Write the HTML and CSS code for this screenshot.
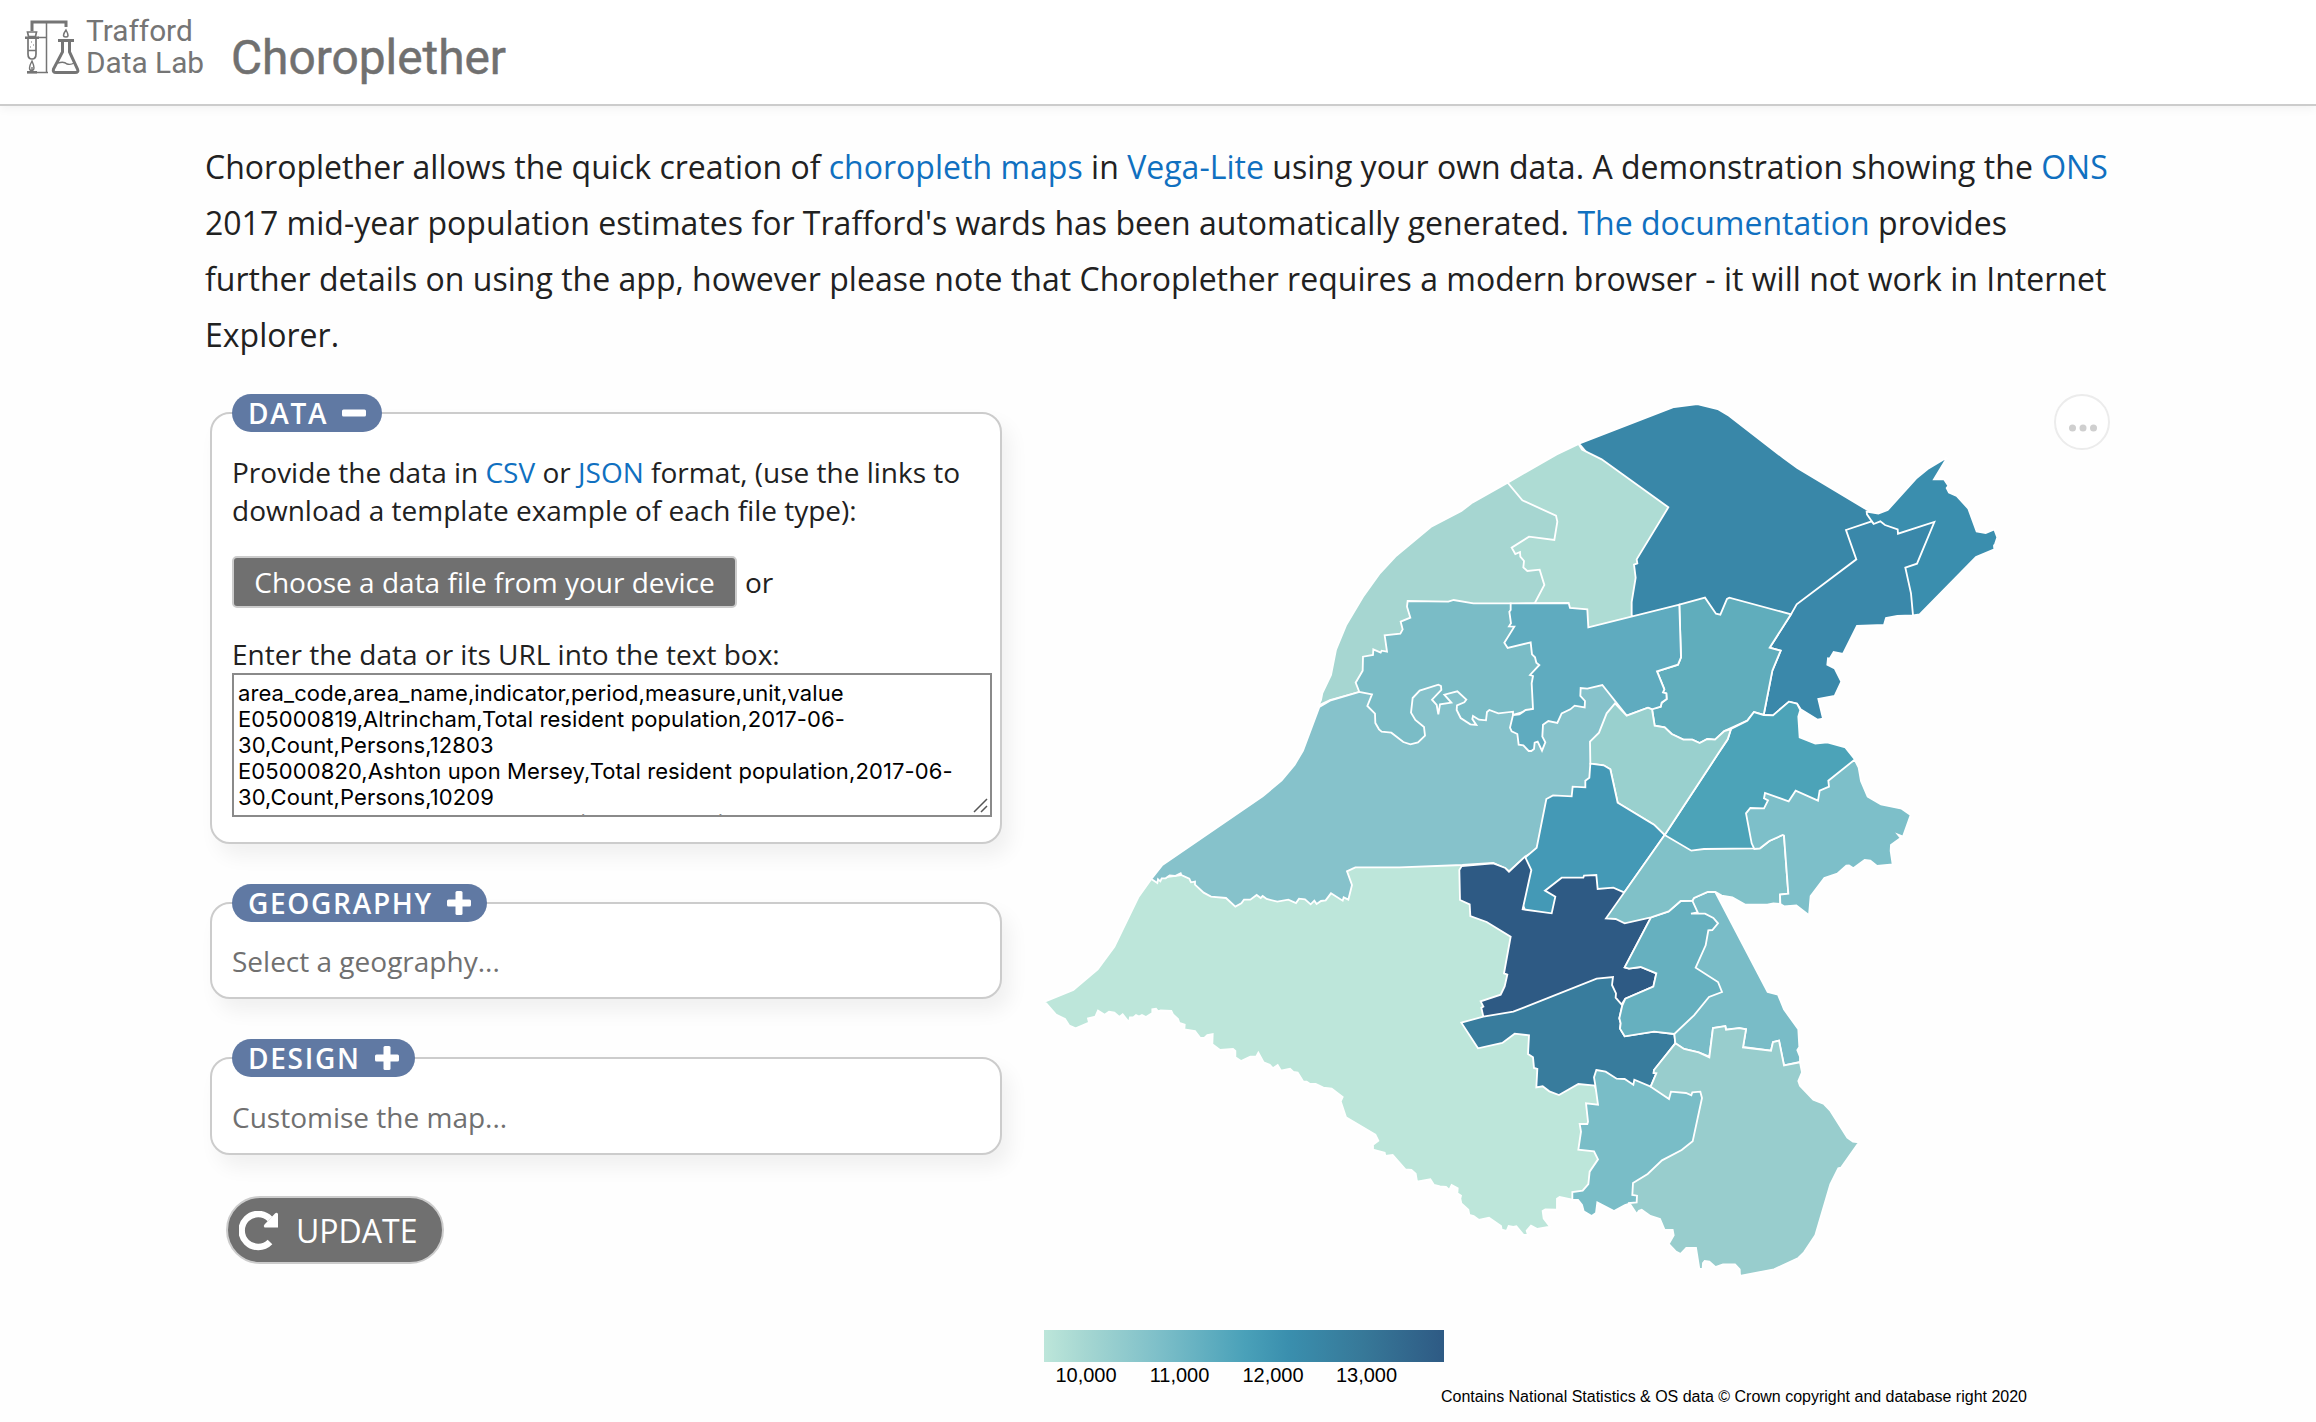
FILE: index.html
```html
<!DOCTYPE html>
<html lang="en">
<head>
<meta charset="utf-8">
<title>Choroplether</title>
<link rel="stylesheet" href="styles.css">
</head>
<body>
<header class="banner">
  <svg class="logo" width="56" height="56" viewBox="0 0 56 56" fill="none" stroke="#757575">
    <path d="M8 13V4H42V9" stroke-width="3"/>
    <path d="M22.500 5V55M14 19.500H22M3 54.500H24" stroke-width="1.500"/>
    <path d="M3 54.300H13M1 19.800H15" stroke-width="2.500"/>
    <path d="M3.500 14H12.500L11.500 18.500H4.500Z" stroke-width="1.700"/>
    <path d="M4 21V36Q4 41 8 41Q12 41 12 36V21M4 32.500H12" stroke-width="1.700"/>
    <path d="M7 24h1M9 27h1M6 29h1" stroke-width="1.200"/>
    <path d="M8 43Q3 52 8 53Q12 52 8 43ZM8 49V53" stroke-width="1.400"/>
    <path d="M42 12Q37 19 42 19Q46 19 42 12Z" stroke-width="1.500"/>
    <path d="M34 22.500H50M38.500 23V34L29.500 51Q28.500 54.500 32 54.500H51Q55 54.500 53.500 51L45.500 34V23" stroke-width="3"/>
    <path d="M34 45Q40 43 43 46Q47 47 50 45" stroke-width="1.400"/>
  </svg>
  <div class="lab"><span class="lab-a">Trafford</span><span class="lab-b">Data Lab</span></div>
  <h1 class="title">Choroplether</h1>
</header>
<main>
  <p class="intro">Choroplether allows the quick creation of <a>choropleth maps</a> in <a>Vega-Lite</a> using your own data. A demonstration showing the <a>ONS</a><br>2017 mid-year population estimates for Trafford's wards has been automatically generated. <a>The documentation</a> provides<br>further details on using the app, however please note that Choroplether requires a modern browser - it will not work in Internet<br>Explorer.</p>
  <div class="columns">
    <form class="controls">
      <section class="panel panel-data">
        <h2 class="pill">DATA <svg width="24" height="24" viewBox="0 0 24 24"><rect y="8.500" width="24" height="7" rx="1.500" fill="#fff"/></svg></h2>
        <p class="text">Provide the data in <a>CSV</a> or <a>JSON</a> format, (use the links to<br>download a template example of each file type):</p>
        <div class="choose"><button type="button" class="file">Choose a data file from your device</button><span class="or">or</span></div>
        <label class="text">Enter the data or its URL into the text box:</label>
        <div class="box">
          <textarea spellcheck="false">area_code,area_name,indicator,period,measure,unit,value
E05000819,Altrincham,Total resident population,2017-06-
30,Count,Persons,12803
E05000820,Ashton upon Mersey,Total resident population,2017-06-
30,Count,Persons,10209
E05000821,Broadheath,Total resident population,2017-06-</textarea>
          <svg class="grip" width="16" height="16" viewBox="0 0 16 16" stroke="#555" stroke-width="1.500"><path d="M1 14L14 1M8 14L14 8"/></svg>
        </div>
      </section>
      <section class="panel panel-geo">
        <h2 class="pill">GEOGRAPHY <svg width="24" height="24" viewBox="0 0 24 24" fill="#fff"><rect y="8.500" width="24" height="7" rx="1.500"/><rect x="8.500" width="7" height="24" rx="1.500"/></svg></h2>
        <p class="hint">Select a geography...</p>
      </section>
      <section class="panel panel-design">
        <h2 class="pill">DESIGN <svg width="24" height="24" viewBox="0 0 24 24" fill="#fff"><rect y="8.500" width="24" height="7" rx="1.500"/><rect x="8.500" width="7" height="24" rx="1.500"/></svg></h2>
        <p class="hint">Customise the map...</p>
      </section>
      <button type="button" class="update"><svg width="40" height="40" viewBox="0 0 40 40"><path d="M31 31A16.500 16.500 0 1 1 31 8" fill="none" stroke="#fff" stroke-width="6.500"/><path d="M39 3V16.500H25.500Q24 15 25.500 13.500L36 2.500Q38 1 39 3Z" fill="#fff"/></svg>UPDATE</button>
    </form>
    <figure class="map">
      <svg width="1090" height="1032" viewBox="1030 390 1090 1032">
        <defs><linearGradient id="ramp"><stop offset="0" stop-color="#bde6da"/><stop offset=".1" stop-color="#a6d7d2"/><stop offset=".28" stop-color="#7fc0c9"/><stop offset=".5" stop-color="#4aa1b9"/><stop offset=".61" stop-color="#3a8fae"/><stop offset=".8" stop-color="#377898"/><stop offset="1" stop-color="#2e5a84"/></linearGradient></defs>
        <g class="wards">
        <g transform="translate(1660 380) scale(.33333)">
          <path fill="#3987a8" d="M-243 191L42 81L112 72L173 87L207 107L372 235L412 264L624 391L650 430L600 600L500 800L300 800L-100 780L-85 707L-200 600L-150 300Z"/>
          <path fill="#3a8eae" d="M620 395L655 401L683 390L768 296L803 267L862 232L822 298L852 298L865 317L860 324L867 338L890 348L925 386L950 454L977 459L1003 448L1012 472L1006 490L1002 497L1003 508L948 531L779 703L759 706L700 650L650 500L641 432L621 403Z"/>
          <path fill="#3a88aa" d="M641 432L661 424L675 435L713 448L714 461L823 426L771 551L736 563L753 640L759 706L712 708L678 714L672 735L591 738L549 822L521 816L509 836L504 835L502 854L524 865L544 905L524 948L475 957L489 1016L473 1019L422 988L411 971L387 965L339 1006L311 1005L337 872L362 812L329 803L393 703L410 673L589 538L558 450L635 424Z"/>
          <path fill="#60adbc" d="M58 674L135 653L168 701L181 704L201 657L208 653L393 703L329 803L362 812L337 872L311 1005L282 996L262 1022L193 1053L165 1079L142 1077L119 1089L97 1079L70 1079L35 1062L14 1042L-16 1037L-24 986L2 980L5 968L20 957L19 940L9 937L13 928L-9 874L54 854L63 832Z"/>
        </g>
        <g transform="translate(1280 380) scale(.33333)">
          <path fill="#aedcd4" d="M683 308L830 223L896 192L906 209L965 238L1165 382L1070 538L1072 550L1062 554L1067 593L1055 666L1055 707L1100 800L700 750L720 600L600 500L640 400Z"/>
          <path fill="#a6d6d1" d="M115 977L123 960L127 939L153 885L168 809L198 736L249 650L298 582L346 530L455 439L544 393L578 367L683 308L727 361L828 407L832 425L823 480L747 470L695 503L706 522L720 516L721 530L732 543L730 562L742 573L779 569L793 615L765 668L700 720L400 900L240 936L150 960Z"/>
        </g>
        <g transform="translate(1030 660) scale(.33333)">
          <path fill="#bde6da" d="M364 657L326 710L253 860L203 928L130 990L44 1025L78 1064L105 1077L118 1097L137 1105L177 1088L174 1075L196 1070L204 1052L224 1064L237 1055L253 1058L268 1071L278 1063L297 1087L300 1072L310 1072L318 1065L327 1070L336 1065L348 1071L367 1059L367 1048L378 1046L384 1054L392 1051L424 1053L429 1063L444 1077L448 1089L464 1094L463 1108L495 1113L511 1134L523 1134L532 1125L548 1122L547 1153L570 1170L609 1167L616 1173L616 1192L633 1203L661 1190L679 1189L685 1178L701 1207L719 1214L729 1225L743 1215L753 1232L780 1226L790 1236L803 1238L820 1265L830 1265L840 1272L857 1272L880 1283L905 1286L938 1311L932 1324L948 1372L1036 1424L1045 1442L1029 1454L1029 1469L1064 1478L1066 1488L1088 1485L1126 1528L1144 1530L1157 1541L1161 1565L1201 1558L1212 1575L1230 1579L1248 1581L1258 1590L1265 1575L1283 1585L1282 1600L1293 1607L1291 1616L1294 1630L1315 1649L1318 1665L1331 1668L1347 1680L1377 1673L1413 1698L1415 1709L1430 1713L1436 1698L1450 1701L1459 1699L1481 1725L1494 1725L1490 1712L1503 1697L1522 1707L1560 1700L1541 1675L1538 1653L1546 1648L1581 1649L1581 1616L1589 1611L1627 1619L1635 1612L1700 1590L1720 1500L1720 1300L1700 1200L1700 1100L1700 900L1500 700L1300 700L1300 600L500 640L454 645Z"/>
          <path fill="#86c2cb" d="M364 657L396 616L698 409L755 361L794 314L819 272L868 141L900 122L988 96L1100 0L1700 0L1760 60L1780 200L1650 490L1485 590L1437 634L1425 625L1390 609L1297 615L1108 622L976 622L951 634L966 675L955 719L941 712L938 722L903 700L887 721L873 723L860 732L853 722L842 733L825 718L807 716L798 729L775 719L742 725L710 717L698 708L692 714L680 705L661 719L642 719L634 730L616 740L588 714L543 710L521 698L495 674L495 665L483 667L478 656L454 645L452 640L435 648L419 646L407 655L395 655L391 664L384 658L382 669Z"/>
        </g>
        <g transform="translate(1280 380) scale(.33333)">
          <path fill="#7abcc6" d="M383 663L505 665L521 660L580 670L692 670L800 700L800 950L759 987L699 1005L699 995L655 1000L628 990L621 996L618 1021L597 1019L579 1008L577 1017L589 1035L571 1033L542 1014L530 990L531 976L553 967L559 959L532 934L493 944L514 968L480 973L475 1003L470 975L456 959L484 930L483 918L475 914L419 932L398 954L393 998L406 1020L432 1041L435 1067L414 1087L391 1093L370 1086L334 1058L305 1055L297 1048L286 1029L285 1001L262 978L276 943L238 936L227 908L248 872L249 830L279 825L280 808L302 818L305 812L321 815L314 766L361 761L368 748L362 725L391 713L381 680Z"/>
          <path fill="#5fabbf" d="M692 670L866 669L870 684L922 688L925 742L1198 674L1203 832L1194 854L1131 874L1153 928L1149 937L1159 940L1160 957L1145 968L1142 980L1116 988L1104 983L1040 1007L967 915L922 926L902 924L901 948L915 963L914 982L884 977L871 988L845 1000L832 1029L805 1023L789 1034L787 1070L796 1087L786 1112L773 1085L764 1088L762 1107L754 1113L746 1113L730 1096L716 1094L712 1062L695 1054L690 1043L699 1005L718 1003L737 990L759 987L755 910L759 888L750 885L778 855L769 848L765 832L756 823L752 787L683 804L673 788L703 740L687 739L693 730L688 695L692 690Z"/>
        </g>
        <g transform="translate(1430 740) scale(.33333)">
          <path fill="#4ca3b8" d="M903 -33L952 -58L972 -84L1001 -75L1029 -74L1077 -115L1101 -109L1111 -90L1105 -70L1109 -8L1156 11L1192 7L1246 22L1276 60L1200 200L1000 400L784 380L704 285L865 40L893 -2Z"/>
          <path fill="#99d0ce" d="M555 -110L590 -73L654 -97L666 -92L674 -43L704 -38L725 -18L760 -1L787 -1L809 9L832 -3L855 -1L883 -27L903 -33L893 -2L865 40L704 285L672 254L563 188L541 88L521 76L481 71L480 5L507 -22L530 -80Z"/>
          <path fill="#4499b6" d="M481 71L521 76L541 88L563 188L672 254L704 285L560 490L400 600L285 510L240 400L289 350L320 323L349 177L369 166L425 169L428 140L466 142L466 122L478 113Z"/>
          <path fill="#2e5a84" d="M95 378L190 370L226 384L237 395L285 350L304 390L278 508L365 520L376 470L345 452L395 413L460 413L462 407L499 405L503 447L550 443L582 457L620 480L663 532L584 682L597 686L632 681L679 700L670 740L586 776L575 793L540 850L200 850L160 830L154 803L160 800L152 784L212 764L224 739L232 704L222 700L242 590L170 546L121 528L119 493L90 480L88 390Z"/>
          <path fill="#387c9d" d="M94 848L160 830L250 815L500 716L549 711L546 735L558 760L557 773L577 796L568 835L572 850L570 866L584 889L672 875L733 882L736 910L672 990L671 999L679 1000L662 1040L600 1080L510 1080L494 1037L445 1032L387 1065L358 1054L338 1039L319 1042L322 987L312 984L309 952L294 942L297 886L254 881L217 909L144 925Z"/>
          <path fill="#79bcc7" d="M787 482L792 474L833 456L856 456L1013 756L1044 764L1062 808L1105 868L1108 921L1102 930L1110 950L1110 966L1062 976L1047 902L1029 907L1023 932L939 921L948 868L928 865L889 869L886 859L849 864L838 950L806 937L762 927L736 910L733 882L750 700L760 520Z"/>
          <path fill="#66b0bf" d="M663 532L716 514L752 483L787 482L803 517L783 521L825 521L850 534L864 550L847 570L835 571L827 616L797 683L864 726L876 756L837 771L792 826L733 882L672 875L584 889L570 866L572 850L568 835L577 796L586 776L670 740L679 700L632 681L597 686L584 682Z"/>
          <path fill="#80c1c8" d="M704 285L784 332L822 327L990 325L1018 303L1058 285L1062 287L1075 461L1050 464L1051 492L1030 490L1012 494L945 494L907 472L875 467L856 456L833 456L792 474L787 482L752 483L716 514L663 532L584 550L557 537L528 535Z"/>
          <path fill="#7dbfc9" d="M1274 59L1286 83L1293 123L1313 170L1353 193L1415 206L1442 225L1419 290L1404 284L1412 294L1383 315L1382 333L1388 373L1341 378L1321 362L1304 360L1270 385L1257 376L1249 377L1222 401L1183 414L1142 468L1137 526L1099 496L1062 499L1051 492L1050 464L1075 461L1062 287L1058 285L1018 303L990 325L973 327L965 310L948 220L961 204L1002 205L1014 181L1002 175L1005 159L1076 184L1097 152L1164 182L1169 152L1197 140L1195 122Z"/>
        </g>
        <g transform="translate(1500 980) scale(.33333)">
          <path fill="#79bdc7" d="M289 270L317 275L350 296L374 297L400 314L403 299L452 320L620 330L600 500L420 640L410 669L388 671L375 675L342 693L292 667L288 699L275 708L251 694L246 675L234 660L217 659L217 636L248 632L265 612L269 575L294 538L282 514L235 509L243 455L239 432L262 432L264 425L258 370L294 374L286 316L282 292Z"/>
          <path fill="#98cdcd" d="M526 190L552 207L596 217L628 232L639 144L676 138L678 149L718 144L738 148L729 202L813 212L819 186L837 182L852 256L900 247L906 277L895 303L900 317L940 359L972 372L990 391L1042 473L1059 485L1077 487L1023 563L1015 565L991 613L946 766L912 817L895 834L822 868L720 888L719 868L705 853L669 853L646 861L628 845L614 843L609 849L608 867L598 867L588 804L559 804L542 822L528 815L506 792L521 766L518 750L494 750L480 717L451 708L425 689L417 692L410 702L388 669L410 667L411 647L397 645L399 609L443 582L486 541L545 510L578 484L606 354L601 335L577 337L574 346L558 339L513 335L507 357L452 320L469 280L461 279L462 270Z"/>
        </g>
        </g>
        <rect x="1044" y="1330" width="400" height="32" fill="url(#ramp)"/>
        <g class="ticks"><text x="1086" y="1382">10,000</text><text x="1179.500" y="1382">11,000</text><text x="1273" y="1382">12,000</text><text x="1366.500" y="1382">13,000</text></g>
        <text class="credit" x="1441" y="1402" textLength="586">Contains National Statistics &amp; OS data © Crown copyright and database right 2020</text>
      </svg>
      <svg class="menu" width="64" height="64" viewBox="0 0 64 64"><circle cx="32" cy="32" r="27" fill="#fff" stroke="#ececec" stroke-width="2"/><g fill="#cfcfcf"><circle cx="22.500" cy="38" r="3.500"/><circle cx="33" cy="38" r="3.500"/><circle cx="43.500" cy="38" r="3.500"/></g></svg>
    </figure>
  </div>
</main>
</body>
</html>
```
FILE: styles.css
```css
* { box-sizing: border-box; }
html, body { margin: 0; background: #fefefe; }
body { height: 1422px; overflow: hidden; font-family: "Open Sans", sans-serif; color: #212121; }
h1, h2, p, figure { margin: 0; }
a { color: #1070c0; }
.banner { height: 106px; border-bottom: 2px solid #ccc; box-shadow: 0 2px 10px rgba(0,0,0,.06); background: #fff; display: flex; align-items: flex-start; padding-left: 24px; font-family: Roboto, sans-serif; color: #707070; white-space: nowrap; }
.logo { margin-top: 18px; flex: none; }
.lab { display: flex; flex-direction: column; margin: 15px 0 0 6px; width: 145px; font-size: 29.800px; line-height: 32px; color: #757575; }
.title { font-size: 47.800px; line-height: 56px; font-weight: 400; margin-top: 30px; -webkit-text-stroke: .5px #707070; }
.intro { padding: 33px 0 0 205px; font-size: 32px; line-height: 56px; letter-spacing: .015px; white-space: nowrap; }
.columns { display: flex; height: 1032px; margin-top: 27px; }
.controls { width: 820px; flex: none; padding: 22px 0 0 210px; }
.panel { width: 792px; border: 2px solid #ccc; border-radius: 20px; background: #fff; box-shadow: 8px 12px 20px rgba(0,0,0,.06); padding: 0 0 0 20px; display: flex; flex-direction: column; align-items: flex-start; }
.panel-data { height: 432px; }
.panel-geo { height: 97px; margin-top: 58px; }
.panel-design { height: 98px; margin-top: 58px; }
.pill { height: 38px; margin-top: -20px; border-radius: 19px; background: #6079a3; color: #fff; font-size: 28px; line-height: 38px; font-weight: 600; letter-spacing: 1.700px; padding: 0 16px; display: flex; align-items: center; gap: 14px; flex: none; }
.text { font-size: 28px; line-height: 38px; white-space: nowrap; }
.panel-data .pill + .text { margin-top: 21px; }
.hint { font-size: 28px; line-height: 38px; color: #707070; margin-top: 20px; }
.panel-design .hint { margin-top: 21px; }
.choose { display: flex; align-items: center; gap: 8px; margin: 27px 0; font-size: 28px; height: 52px; }
.file { font: 28px/38px "Open Sans", sans-serif; width: 505px; height: 52px; padding: 0; white-space: nowrap; background: #707070; color: #fff; border: 2px solid #ccc; border-radius: 5px; }
.box { position: relative; width: 760px; height: 144px; }
textarea { display: block; width: 760px; height: 144px; resize: none; overflow: hidden; margin: 0; padding: 5px 0 0 4px; border: 2px solid #8a8a8a; border-radius: 0; background: #fff; color: #000; font: 22px/26px Inter, sans-serif; letter-spacing: .1px; white-space: pre; outline: 0; }
.grip { position: absolute; right: 3px; bottom: 3px; }
.update { margin: 41px 0 0 16px; width: 218px; height: 68px; border-radius: 34px; border: 2px solid #ccc; background: #707070; color: #fff; font: 32px/44px "Open Sans", sans-serif; display: flex; align-items: center; gap: 17px; padding: 1px 0 0 11px; }
.map { position: relative; margin-left: 210px; }
.map > svg { display: block; }
.wards path { stroke: #fff; stroke-width: 5.500; }
.ticks { font: 20px "Liberation Sans", Arial, sans-serif; text-anchor: middle; }
.credit { font: 16px "Liberation Sans", Arial, sans-serif; }
.menu { position: absolute; left: 1020px; top: 0; }
```
